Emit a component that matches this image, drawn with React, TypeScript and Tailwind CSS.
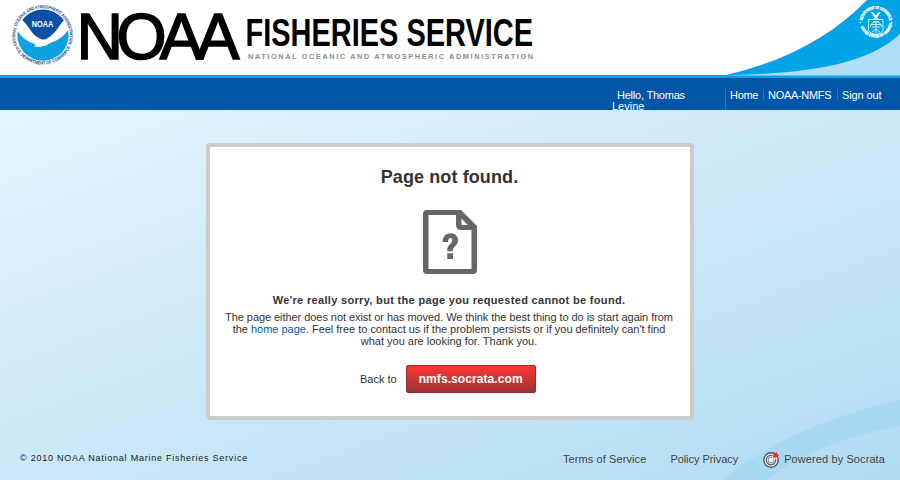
import React from "react";

function NoaaSeal() {
  return (
    <svg width="64" height="64" viewBox="11 4 64 64" className="shrink-0 overflow-visible">
      <defs>
        <path id="sealTop" d="M17.2 45.4A27.2 27.2 0 1 1 67.8 45.4" />
        <path id="sealBottom" d="M13.6 43A30.4 30.4 0 0 0 71.8 43" />
        <clipPath id="sealDisc"><circle cx="43" cy="35.2" r="25.6" /></clipPath>
      </defs>
      <circle cx="42.8" cy="35.5" r="30.5" fill="#f7fafc" />
      <g clipPath="url(#sealDisc)">
        <rect x="17" y="9" width="53" height="53" fill="#fff" />
        <path d="M21 19C28 9 34 8 43 8S58 9 65 19C62 22 60 25 57 29.5Q51 37 45 39.5H42Q35 37 31 31Q26 23 21 19Z" fill="#0b50a5" />
        <path d="M16 29C21 37 27 42 34 43.5L36 45 34 46.5 39 47 46 45.5 51 42.5C58 41 64 36 70 28V63H16Z" fill="#0ba2e2" />
        <path d="M34 44.5 41 41 50 41 45 44 38 46Z" fill="#fff" />
      </g>
      <text x="31.7" y="27.2" textLength="21.5" lengthAdjust="spacingAndGlyphs" fill="#fff" fontSize="9.5" fontWeight="bold" fontFamily="Liberation Sans, sans-serif">NOAA</text>
      <g fill="#254f86" fontSize="4.5" fontWeight="bold" fontFamily="Liberation Sans, sans-serif">
        <text><textPath href="#sealTop" textLength="104" lengthAdjust="spacingAndGlyphs">NATIONAL OCEANIC AND ATMOSPHERIC ADMINISTRATION</textPath></text>
        <text><textPath href="#sealBottom" startOffset="5" textLength="68" lengthAdjust="spacingAndGlyphs">U.S. DEPARTMENT OF COMMERCE</textPath></text>
      </g>
    </svg>
  );
}

function Wordmark() {
  return (
    <svg width="460" height="60" viewBox="78 6 460 60" className="ml-[3px] shrink-0 overflow-visible" fontFamily="Liberation Sans, sans-serif">
      <text x="76.5 116.5 159.8 196.4" y="59" fontSize="64.5" fill="#000" stroke="#000" strokeWidth="1.6">NOAA</text>
      <text x="245.5" y="46" fontSize="38.5" fontWeight="bold" textLength="287.5" lengthAdjust="spacingAndGlyphs">FISHERIES SERVICE</text>
      <text x="248" y="59.3" fontSize="7.3" fontWeight="bold" fill="#8c8c8c" textLength="285">NATIONAL OCEANIC AND ATMOSPHERIC ADMINISTRATION</text>
    </svg>
  );
}

function CommerceCorner() {
  return (
    <svg width="180" height="78" viewBox="720 0 180 78" className="shrink-0">
      <defs>
        <path id="commerceTop" d="M862.2 22.5A13.6 13.6 0 0 1 889.4 22.5" />
        <path id="commerceBottom" d="M859.6 23A16.3 16.3 0 0 0 892 23" />
      </defs>
      <path d="M722 76C784 62 831 37 867 0H900V78H722Z" fill="#00a4e6" />
      <path d="M725 75.5C815 73 867 64 900 34V75.5Z" fill="#b0def6" />
      <g fill="#fff" stroke="#fff" strokeWidth=".35" fontSize="4" fontWeight="bold" fontFamily="Liberation Sans, sans-serif">
        <text><textPath href="#commerceTop" startOffset="2" textLength="38.5" lengthAdjust="spacingAndGlyphs">DEPARTMENT OF COMMERCE</textPath></text>
        <text><textPath href="#commerceBottom" startOffset="4" textLength="43" lengthAdjust="spacingAndGlyphs">UNITED STATES OF AMERICA</textPath></text>
      </g>
      <g stroke="#fff" fill="none" strokeWidth=".8">
        <path d="M868.5 19.5H883V30.5Q881 33.5 875.8 34.5Q870 33.5 868.5 30.5Z" />
        <path d="M871.5 12 875.8 18.5 880 12M873 12.5 875.8 17 878.5 12.5M874 19 875.8 16 878 19" strokeWidth="1.1" />
        <path d="M870 27Q873 20 876 22Q879 20 882 27M872 27H880M871 24.5H881M873 22H879M876 22V33M872 32 876 29 880 32" />
      </g>
      <g fill="#fff"><circle cx="860.5" cy="22.5" r=".8" /><circle cx="891.5" cy="22.5" r=".8" /></g>
    </svg>
  );
}

function MissingPageIcon() {
  return (
    <svg width="54" height="64" viewBox="0 0 54 64">
      <path d="M4 0H38L54 16V60Q54 64 50 64H4Q0 64 0 60V4Q0 0 4 0ZM5.5 5V59H48.5V20H38Q33 20 33 15V5ZM38.5 8.5V15H44.8Z" fill="#666" fillRule="evenodd" />
      <path d="M19.5 32C20 26 23 23.3 27.5 23.3C32 23.3 35 26 35 30.3C35 36 29.7 36 29.7 41.2H24.2C24 34 29.3 34.2 29.3 30.3C29.3 28.8 28.7 28 27.5 28C26 28 25.2 29.3 25 32ZM24.2 43.3H30V49H24.2Z" fill="#666" />
    </svg>
  );
}

function SocrataMark() {
  return (
    <svg width="17" height="17" viewBox="0 0 17 17" className="shrink-0">
      <circle cx="8" cy="9" r="7.9" fill="#4f5357" />
      <circle cx="8" cy="9" r="5.9" fill="none" stroke="#e9eaeb" strokeWidth="1.3" />
      <circle cx="8" cy="9" r="3.6" fill="none" stroke="#d8d9da" strokeWidth="1.4" />
      <circle cx="8" cy="9" r="2.5" fill="#eee" />
      <path d="M8 9 10 3 15 7Z" fill="#e9e9e9" />
      <path d="M9.8 6.5 11 1 12.5 2.2 14 1 14.5 3.4 16.2 4.3 13.2 6.5 10.3 6.8Z" fill="#f42a2f" />
    </svg>
  );
}

function BackgroundSwoosh() {
  return (
    <svg className="absolute right-0 bottom-0" width="240" height="100" viewBox="660 380 240 100">
      <path d="M722 480Q790 425 900 400V426Q820 440 766 480Z" fill="#8dcdec" fillOpacity=".33" />
    </svg>
  );
}

export default function App() {
  return (
    <div className="relative flex h-[480px] w-[900px] flex-col overflow-hidden bg-[linear-gradient(160deg,#e4f4fb_15%,#d2ebf8_45%,#c2e4f6_73%,#b0dbf2_100%)] font-['Liberation_Sans',Arial,sans-serif] text-[11px] text-[#333]">
      <BackgroundSwoosh />
      <header className="relative flex h-[78px] shrink-0 justify-between border-b-[3px] border-[#00a4e6] bg-white">
        <div className="flex pt-1 pl-[11px]">
          <NoaaSeal />
          <div className="pt-[2px]"><Wordmark /></div>
        </div>
        <CommerceCorner />
      </header>
      <nav className="relative flex h-8 shrink-0 justify-end overflow-hidden bg-[#0057a8] pr-[14px] leading-[11px] text-white">
        <div className="mt-3 mr-[25px] w-[88px] indent-[5px] tracking-[-0.22px]">Hello, Thomas<br /><span className="tracking-normal">Levine</span></div>
        <div className="mt-[11px] flex">
          <a className="h-6 w-[38px] border-l border-[#42709d] pt-px pl-1 tracking-[-0.3px]">Home</a>
          <a className="h-[11px] w-[74px] border-l border-[#42709d] pt-px pl-1 tracking-[-0.3px]">NOAA-NMFS</a>
          <a className="h-[11px] w-[49px] border-l border-[#42709d] pt-px pl-1 tracking-[-0.1px]">Sign out</a>
        </div>
      </nav>
      <main className="relative mx-auto mt-[33px] flex h-[277px] w-[488px] shrink-0 flex-col items-center rounded-[4px] border-4 border-[#ccc] bg-white">
        <h1 className="mt-[19px] mr-px text-[18px] leading-[22px] font-bold tracking-[0.1px]">Page not found.</h1>
        <div className="mt-[22px]"><MissingPageIcon /></div>
        <h2 className="mt-[19px] mr-[2px] text-[11px] leading-[14px] font-bold tracking-[0.325px] whitespace-nowrap">We're really sorry, but the page you requested cannot be found.</h2>
        <p className="mt-[4px] mr-[2px] text-center leading-[12px] whitespace-nowrap">
          <span className="tracking-[-0.06px]">The page either does not exist or has moved. We think the best thing to do is start again from</span><br />
          <span className="tracking-[-0.02px]">the <a className="text-[#0057a8]">home page</a>. Feel free to contact us if the problem persists or if you definitely can't find</span><br />
          what you are looking for. Thank you.
        </p>
        <div className="mt-[18px] flex items-center gap-[9px] self-start pl-[150px]">
          <span className="whitespace-nowrap">Back to</span>
          <a className="flex h-7 w-[130px] items-center justify-center rounded-[2px] border border-[#982c2e] bg-linear-to-b from-[#ff3333] to-[#993333] text-[12px] font-bold tracking-[0.08px] text-white">nmfs.socrata.com</a>
        </div>
      </main>
      <footer className="relative mt-[30px] flex h-[18px] shrink-0 items-center justify-between pr-[15px] pl-5">
        <span className="text-[9px] tracking-[0.76px] text-[#222]">© 2010 NOAA National Marine Fisheries Service</span>
        <div className="flex items-center text-[#444]">
          <a className="mr-[24px] tracking-[0.09px]">Terms of Service</a>
          <a className="mr-[25px] tracking-[-0.05px]">Policy Privacy</a>
          <a className="flex items-center gap-1 tracking-[0.1px]"><SocrataMark />Powered by Socrata</a>
        </div>
      </footer>
    </div>
  );
}
